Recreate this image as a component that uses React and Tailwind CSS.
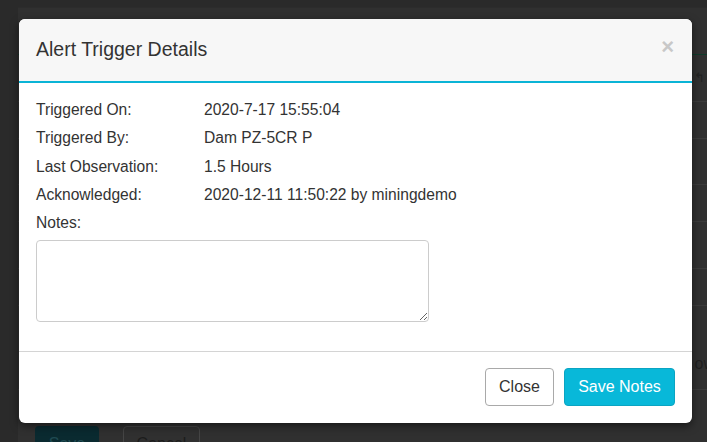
export default function App() {
  const details = [
    ['Triggered On:', '2020-7-17 15:55:04'],
    ['Triggered By:', 'Dam PZ-5CR P'],
    ['Last Observation:', '1.5 Hours'],
    ['Acknowledged:', '2020-12-11 11:50:22 by miningdemo'],
  ]

  return (
    <div
      className="relative w-[707px] h-[442px] overflow-hidden bg-[#2a2a2a]"
      style={{ fontFamily: '"Liberation Sans", Arial, sans-serif' }}
    >
      {/* page behind the backdrop (dimmed) */}
      <div className="ml-[18px] mt-[7px] bg-[#303030] border-t border-[#2c2c2c] flex flex-col">
        <div className="h-[46px]" />
        <div className="h-px bg-[#0f3b2a]" />
        <div className="h-[46px] flex items-center justify-end pr-[2px] text-[#222] text-[13px]">↰</div>
        <div className="h-px bg-[#3b3b3b]" />
        <div className="h-[36px]" />
        <div className="h-px bg-[#3b3b3b]" />
        <div className="h-[45px]" />
        <div className="h-px bg-[#3b3b3b]" />
        <div className="h-[36px]" />
        <div className="h-px bg-[#3b3b3b]" />
        <div className="h-[46px]" />
        <div className="h-px bg-[#3b3b3b]" />
        <div className="h-[36px]" />
        <div className="h-px bg-[#3b3b3b]" />
        <div className="h-[83px] pt-[49px] text-right text-[16px] leading-[18px] text-[#1f1f1f] -mr-[8px]">ow</div>
        <div className="h-px bg-[#3b3b3b]" />
        <div className="flex gap-[24px] pl-[17px] pt-[36px]">
          <div className="w-[64px] h-[36px] rounded-[4px] bg-[#0a2a30] text-[#1f4a52] text-[16px] flex items-center justify-center">Save</div>
          <div className="w-[77px] h-[36px] rounded-[4px] border border-[#454545] text-[#1c1c1c] text-[16px] flex items-center justify-center">Cancel</div>
        </div>
      </div>

      {/* modal */}
      <div className="absolute left-[19px] top-[19px] w-[673px] rounded-[6px] bg-white overflow-hidden shadow-[0_3px_9px_rgba(0,0,0,0.5)]">
        <div className="h-[64px] bg-[#f7f7f7] border-b-2 border-[#0ab4d6] flex items-center justify-between pl-[17px] pr-[18px]">
          <h4 className="text-[19.5px] text-[#333] pb-[1px]">Alert Trigger Details</h4>
          <span className="text-[22px] font-bold leading-none text-[#c8c8c8] -mt-[7px]">×</span>
        </div>

        <div className="px-[17px] pt-[13px] pb-[29px] text-[15.6px] text-[#333]">
          {details.map(([label, value]) => (
            <div key={label} className="flex h-[28.25px] leading-[28.25px]">
              <div className="w-[168px]">{label}</div>
              <div>{value}</div>
            </div>
          ))}
          <div className="h-[28.25px] leading-[28.25px]">Notes:</div>
          <textarea className="mt-[3px] block w-[393px] h-[82px] rounded-[4px] border border-[#cccccc] bg-white" />
        </div>

        <div className="h-px bg-[#d4d4d4]" />

        <div className="flex justify-end gap-[10px] pt-[16px] pb-[17px] pr-[17px]">
          <button className="w-[69px] h-[38px] rounded-[4px] border border-[#a9a9a9] bg-white text-[16px] text-[#333]">
            Close
          </button>
          <button className="w-[111px] h-[38px] rounded-[4px] border border-[#0ba4c2] bg-[#08b8d9] text-[16px] text-white">
            Save Notes
          </button>
        </div>
      </div>
    </div>
  )
}
